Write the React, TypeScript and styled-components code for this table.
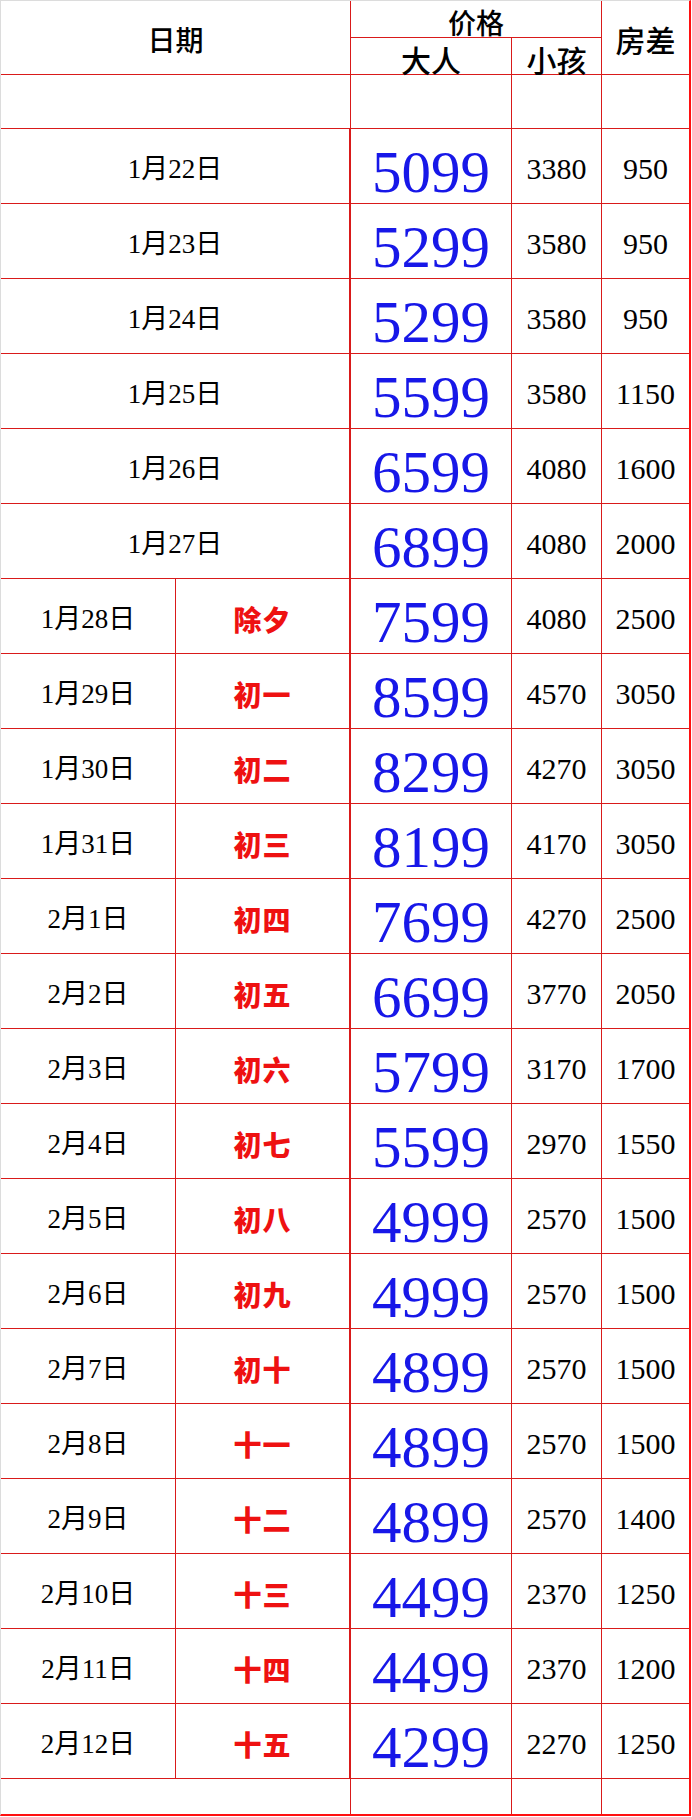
import React from "react";
import styled, { createGlobalStyle, css } from "styled-components";

const GlobalStyle = createGlobalStyle`
  html, body {
    margin: 0;
    padding: 0;
    background: #ffffff;
  }
  body {
    font-family: "Liberation Serif", "Noto Sans CJK SC", serif;
    color: #000;
  }
`;

const LINE = "#d91a1a";
const EDGE = "#ff1010";

const Sheet = styled.div`
  width: 691px;
  box-sizing: border-box;
  border-left: 1px solid #dcdcdc;
  border-top: 1px solid #dcdcdc;
  border-right: 2px solid ${EDGE};
  border-bottom: 2px solid ${EDGE};
  display: grid;
  grid-template-columns: 175px 175px 161px 90px 87px;
  grid-template-rows: 37px 37px 54px repeat(22, 75px) 35px;
  background: #fff;
`;

const cellBase = css<{ $last?: boolean; $noBottom?: boolean }>`
  box-sizing: border-box;
  display: flex;
  align-items: center;
  justify-content: center;
  line-height: 1;
  white-space: nowrap;
  border-right: ${(p) => (p.$last ? "none" : `1px solid ${LINE}`)};
  border-bottom: ${(p) => (p.$noBottom ? "none" : `1px solid ${LINE}`)};
`;

const HeadCell = styled.div<{
  $cols?: number;
  $rows?: number;
  $size: number;
  $shift: number;
  $last?: boolean;
}>`
  ${cellBase};
  grid-column: span ${(p) => p.$cols ?? 1};
  grid-row: span ${(p) => p.$rows ?? 1};
  font-family: "Noto Sans CJK SC", sans-serif;
  font-weight: 500;
  font-size: ${(p) => p.$size}px;
  padding-top: ${(p) => p.$shift}px;
`;

const BlankCell = styled.div<{ $cols?: number; $last?: boolean; $noBottom?: boolean }>`
  ${cellBase};
  grid-column: span ${(p) => p.$cols ?? 1};
`;

const DateCell = styled.div<{ $wide: boolean }>`
  ${cellBase};
  grid-column: span ${(p) => (p.$wide ? 2 : 1)};
  border-right: ${(p) => (p.$wide ? `2px solid ${LINE}` : `1px solid ${LINE}`)};
  font-family: "Liberation Serif", "Noto Sans CJK SC", serif;
  font-size: 27px;
  padding-top: 6px;
`;

const LunarCell = styled.div`
  ${cellBase};
  border-right: 2px solid ${LINE};
  font-family: "Noto Sans CJK SC", sans-serif;
  font-weight: 900;
  font-size: 28px;
  color: #ee1111;
  padding-top: 5px;
  letter-spacing: 1px;
`;

const AdultCell = styled.div`
  ${cellBase};
  font-family: "Liberation Serif", serif;
  font-size: 59px;
  color: #1717e8;
  padding-top: 13px;
`;

const SmallNum = styled.div<{ $last?: boolean }>`
  ${cellBase};
  font-family: "Liberation Serif", serif;
  font-size: 30px;
  padding-top: 6px;
`;

type Row = [string, string, number, number, number];

const rows: Row[] = [
  ["1月22日", "", 5099, 3380, 950],
  ["1月23日", "", 5299, 3580, 950],
  ["1月24日", "", 5299, 3580, 950],
  ["1月25日", "", 5599, 3580, 1150],
  ["1月26日", "", 6599, 4080, 1600],
  ["1月27日", "", 6899, 4080, 2000],
  ["1月28日", "除夕", 7599, 4080, 2500],
  ["1月29日", "初一", 8599, 4570, 3050],
  ["1月30日", "初二", 8299, 4270, 3050],
  ["1月31日", "初三", 8199, 4170, 3050],
  ["2月1日", "初四", 7699, 4270, 2500],
  ["2月2日", "初五", 6699, 3770, 2050],
  ["2月3日", "初六", 5799, 3170, 1700],
  ["2月4日", "初七", 5599, 2970, 1550],
  ["2月5日", "初八", 4999, 2570, 1500],
  ["2月6日", "初九", 4999, 2570, 1500],
  ["2月7日", "初十", 4899, 2570, 1500],
  ["2月8日", "十一", 4899, 2570, 1500],
  ["2月9日", "十二", 4899, 2570, 1400],
  ["2月10日", "十三", 4499, 2370, 1250],
  ["2月11日", "十四", 4499, 2370, 1200],
  ["2月12日", "十五", 4299, 2270, 1250],
];

export default function App() {
  return (
    <>
      <GlobalStyle />
      <Sheet>
        <HeadCell $cols={2} $rows={2} $size={28} $shift={3}>
          日期
        </HeadCell>
        <HeadCell $cols={2} $size={28} $shift={5}>
          价格
        </HeadCell>
        <HeadCell $rows={2} $size={30} $shift={3} $last>
          房差
        </HeadCell>
        <HeadCell $size={30} $shift={5}>
          大人
        </HeadCell>
        <HeadCell $size={30} $shift={5}>
          小孩
        </HeadCell>

        <BlankCell $cols={2} />
        <BlankCell />
        <BlankCell />
        <BlankCell $last />

        {rows.map(([date, lunar, adult, child, diff]) => (
          <React.Fragment key={date}>
            <DateCell $wide={!lunar}>{date}</DateCell>
            {lunar && <LunarCell>{lunar}</LunarCell>}
            <AdultCell>{adult}</AdultCell>
            <SmallNum>{child}</SmallNum>
            <SmallNum $last>{diff}</SmallNum>
          </React.Fragment>
        ))}

        <BlankCell $cols={2} $noBottom />
        <BlankCell $noBottom />
        <BlankCell $noBottom />
        <BlankCell $last $noBottom />
      </Sheet>
    </>
  );
}
